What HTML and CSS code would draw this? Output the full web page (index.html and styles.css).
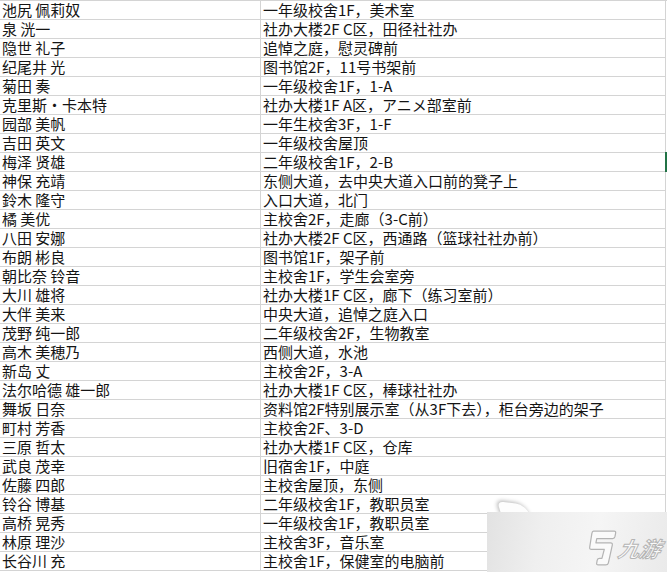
FILE: index.html
```html
<!DOCTYPE html>
<html lang="zh-CN">
<head>
<meta charset="utf-8">
<title>表</title>
<link rel="stylesheet" href="styles.css">
</head>
<body>
<div class="sheet">
  <div class="grid">
    <div class="c n">池尻 佩莉奴</div><div class="c p">一年级校舍1F，美术室</div>
    <div class="c n">泉 洸一</div><div class="c p">社办大楼2F C区，田径社社办</div>
    <div class="c n">隐世 礼子</div><div class="c p">追悼之庭，慰灵碑前</div>
    <div class="c n">纪尾井 光</div><div class="c p">图书馆2F，11号书架前</div>
    <div class="c n">菊田 奏</div><div class="c p">一年级校舍1F，1-A</div>
    <div class="c n">克里斯・卡本特</div><div class="c p">社办大楼1F A区，アニメ部室前</div>
    <div class="c n">园部 美帆</div><div class="c p">一年生校舍3F，1-F</div>
    <div class="c n">吉田 英文</div><div class="c p">一年级校舍屋顶</div>
    <div class="c n">梅泽 贤雄</div><div class="c p">二年级校舍1F，2-B</div>
    <div class="c n">神保 充靖</div><div class="c p">东侧大道，去中央大道入口前的凳子上</div>
    <div class="c n">鈴木 隆守</div><div class="c p">入口大道，北门</div>
    <div class="c n">橘 美优</div><div class="c p">主校舍2F，走廊（3-C前）</div>
    <div class="c n">八田 安娜</div><div class="c p">社办大楼2F C区，西通路（篮球社社办前）</div>
    <div class="c n">布朗 彬良</div><div class="c p">图书馆1F，架子前</div>
    <div class="c n">朝比奈 铃音</div><div class="c p">主校舍1F，学生会室旁</div>
    <div class="c n">大川 雄将</div><div class="c p">社办大楼1F C区，廊下（练习室前）</div>
    <div class="c n">大伴 美来</div><div class="c p">中央大道，追悼之庭入口</div>
    <div class="c n">茂野 纯一郎</div><div class="c p">二年级校舍2F，生物教室</div>
    <div class="c n">高木 美穂乃</div><div class="c p">西侧大道，水池</div>
    <div class="c n">新岛 丈</div><div class="c p">主校舍2F，3-A</div>
    <div class="c n">法尔哈德 雄一郎</div><div class="c p">社办大楼1F C区，棒球社社办</div>
    <div class="c n">舞坂 日奈</div><div class="c p">资料馆2F特别展示室（从3F下去），柜台旁边的架子</div>
    <div class="c n">町村 芳香</div><div class="c p">主校舍2F、3-D</div>
    <div class="c n">三原 哲太</div><div class="c p">社办大楼1F C区，仓库</div>
    <div class="c n">武良 茂幸</div><div class="c p">旧宿舍1F，中庭</div>
    <div class="c n">佐藤 四郎</div><div class="c p">主校舍屋顶，东侧</div>
    <div class="c n">铃谷 博基</div><div class="c p">二年级校舍1F，教职员室</div>
    <div class="c n">高桥 晃秀</div><div class="c p">一年级校舍1F，教职员室</div>
    <div class="c n">林原 理沙</div><div class="c p">主校舍3F，音乐室</div>
    <div class="c n">长谷川 充</div><div class="c p">主校舍1F，保健室的电脑前</div>
  </div>
  <div class="sel"></div>
  <div class="tab"></div>
  <div class="mark">
    <svg class="logo" width="32" height="38" viewBox="0 0 34 40">
      <path d="M9 2 H31 Q33 2 32.5 4.5 L31.8 8 Q31.3 10 29.5 10 H12.5 L11.6 14.5 H27 Q29.5 14.5 29 17 L24.8 36 Q24.3 38 22 38 H14 Q12 38 12.4 36 L13 33 Q13.4 31 15.5 31 H18 L20.5 21.5 H7 Q4.5 21.5 5 19 L7.3 4.5 Q7.7 2 9 2 Z" fill="#fafafa" stroke="#b4b4b4" stroke-width="1.3" stroke-linejoin="round"/>
    </svg>
    <span class="brand">九游</span>
  </div>
</div>
</body>
</html>
```
FILE: styles.css
```css
html, body {
  margin: 0;
  padding: 0;
  background: #ffffff;
  overflow: hidden;
}
.sheet {
  position: relative;
  width: 667px;
  height: 572px;
  overflow: hidden;
  font-family: "Noto Sans CJK SC", "Noto Sans CJK JP", sans-serif;
  font-size: 15px;
  color: #141414;
}
.grid {
  display: grid;
  grid-template-columns: 261px 405px;
  grid-auto-rows: 19px;
  border-top: 1px solid #d4d4d4;
}
.c {
  box-sizing: border-box;
  border-bottom: 1px solid #d4d4d4;
  border-right: 1px solid #d4d4d4;
  padding-left: 2px;
  line-height: 18px;
  white-space: nowrap;
}
.sel {
  position: absolute;
  left: 665px;
  top: 152px;
  width: 2px;
  height: 20px;
  background: #217346;
}
.tab {
  position: absolute;
  left: 500px;
  top: 503px;
  width: 28px;
  height: 14px;
  background: #fdfdfd;
  border-radius: 6px 10px 0 0;
  transform: skewX(25deg) rotate(8deg);
  box-shadow: -1px -1px 4px rgba(0,0,0,0.3);
}
.mark {
  position: absolute;
  left: 487px;
  top: 512px;
  width: 180px;
  height: 60px;
  background: linear-gradient(100deg, #e2e2e2 0%, #efefef 30%, #f5f5f5 60%, #eaeaea 100%);
  display: flex;
  align-items: center;
  justify-content: flex-end;
  gap: 2px;
  padding-right: 6px;
  box-sizing: border-box;
}
.logo {
  display: block;
  margin-top: 12px;
}
.brand {
  font-size: 21px;
  font-style: italic;
  font-weight: 700;
  color: #fafafa;
  -webkit-text-stroke: 1px #b4b4b4;
  margin-top: 12px;
  transform: skewX(-12deg);
  display: inline-block;
}
```
